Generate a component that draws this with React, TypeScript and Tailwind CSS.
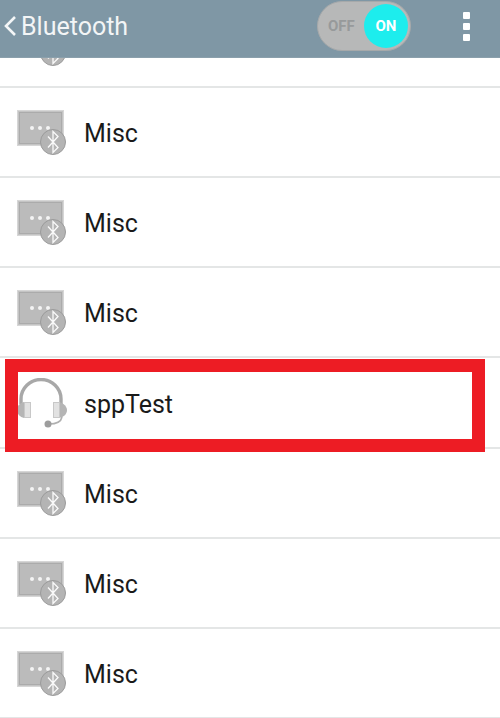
import React from 'react'

function MiscIcon() {
  return (
    <svg width="50" height="46" viewBox="0 0 50 46" className="shrink-0">
      <rect x="0.5" y="0.5" width="46" height="35" fill="#c4c4c4" stroke="#d6d6d6" />
      <rect x="2.5" y="2.5" width="42" height="31" fill="#bbbbbb" stroke="#ababab" strokeWidth="1" />
      <circle cx="15" cy="18" r="2" fill="#f4f4f4" />
      <circle cx="23" cy="18" r="2" fill="#f4f4f4" />
      <circle cx="31" cy="18" r="2" fill="#f4f4f4" />
      <circle cx="36" cy="32" r="12.5" fill="#b4b4b4" stroke="#9b9b9b" strokeWidth="1" />
      <path d="M31 26.5 L41 37.5 L36 42.5 L36 21.5 L41 26.5 L31 37.5" fill="none" stroke="#fafafa" strokeWidth="1.3" />
    </svg>
  )
}

function HeadsetIcon() {
  return (
    <svg width="50" height="52" viewBox="0 0 50 52" className="shrink-0">
      <path d="M4 26 V21 A20 19.5 0 0 1 44 21 V26" fill="none" stroke="#a8a8a8" strokeWidth="3.4" />
      <path d="M7 24 C2 25 0 29 0 32 C0 36 3 39 7 40 Z" fill="#b5b5b5" />
      <path d="M42 24 C47 25 50 29 50 32 C50 36 47 39 42 40 Z" fill="#b5b5b5" />
      <rect x="7.5" y="24.5" width="6" height="15" fill="#e2e2e2" stroke="#c8c8c8" />
      <rect x="36.5" y="24.5" width="6" height="15" fill="#e2e2e2" stroke="#c8c8c8" />
      <path d="M45 39 C44 44 40 46 32 46" fill="none" stroke="#b0b0b0" strokeWidth="1.6" />
      <circle cx="31" cy="46" r="3.5" fill="#9d9d9d" />
    </svg>
  )
}

const rows = ['Misc', 'Misc', 'Misc', 'sppTest', 'Misc', 'Misc', 'Misc']

export default function App() {
  return (
    <div className="relative w-[500px] h-[718px] overflow-hidden bg-white font-['Roboto',sans-serif]">
      <div className="relative z-10 h-[58px] bg-[#7f97a5] flex items-center pl-[2px] pr-[30px] pb-[5px] border-b border-[#8ba0ac]">
        <svg width="16" height="24" viewBox="0 0 16 24" className="shrink-0">
          <path d="M13 3 L4 12 L13 21" fill="none" stroke="#f4f6f7" strokeWidth="2.6" />
        </svg>
        <span className="ml-[3px] text-[25px] text-[#f3f5f6] leading-none">Bluetooth</span>
        <div className="ml-auto mr-[52px] w-[94px] h-[50px] rounded-full bg-[#b7b8b8] border border-[#a6a9aa] flex items-center justify-between pl-[10px] pr-[2px]">
          <span className="text-[15px] font-bold text-[#979a9b]">OFF</span>
          <span className="w-[44px] h-[44px] rounded-full bg-[#1deded] flex items-center justify-center text-[15px] font-bold text-white">ON</span>
        </div>
        <div className="flex flex-col gap-[4px]">
          <span className="w-[7px] h-[7px] rounded-[1px] bg-white" />
          <span className="w-[7px] h-[7px] rounded-[1px] bg-white" />
          <span className="w-[7px] h-[7px] rounded-[1px] bg-white" />
        </div>
      </div>

      <div className="mt-[-60.2px]">
        <div className="h-[90.17px] border-b-2 border-[#e4e6e6] pl-[17px] flex items-start pt-[23px]">
          <MiscIcon />
        </div>
        {rows.map((name, i) => (
          <div key={i} className="h-[90.17px] border-b-2 border-[#e4e6e6] pl-[17px] flex items-center">
            <div className="w-[50px] flex justify-start translate-y-[1px]">
              {name === 'Misc' ? <MiscIcon /> : <HeadsetIcon />}
            </div>
            <span className={i < 3 ? "ml-[17px] text-[25px] leading-none text-[#1a1a1a] translate-y-[1px]" : "ml-[17px] text-[25px] leading-none text-[#1a1a1a] translate-y-[2px]"}>{name}</span>
          </div>
        ))}
      </div>

      <div className="absolute left-[5px] top-[359px] w-[480px] h-[93px] border-[13px] border-[#ed1c24]" />
    </div>
  )
}
